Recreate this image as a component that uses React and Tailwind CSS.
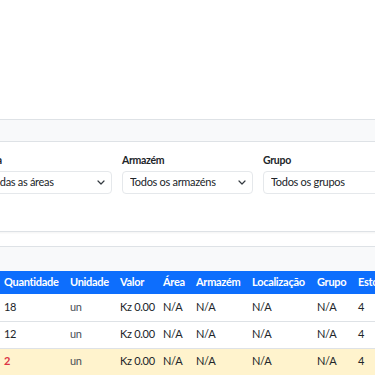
import React from "react";

const font = { fontFamily: 'Lato, "Noto Sans", sans-serif' };

function Chevron() {
  return (
    <svg width="8" height="5" viewBox="0 0 8 5" className="shrink-0">
      <path d="M1 1 L4 4 L7 1" fill="none" stroke="#343a40" strokeWidth="1.2" strokeLinecap="round" strokeLinejoin="round" />
    </svg>
  );
}

function Filter({ label, value, chevron = true }) {
  return (
    <div className="w-[131px] shrink-0 flex flex-col">
      <div className="text-[10.5px] font-bold leading-[18px] text-[#212529] mb-[2px] tracking-[-0.3px]">{label}</div>
      <div className="h-[23px] bg-white border border-[#e5e8eb] rounded-[4px] flex items-center justify-between pl-[7px] pr-[6px] text-[11px] text-[#212529] tracking-[-0.3px]">
        <span className="whitespace-nowrap overflow-hidden">{value}</span>
        {chevron && <Chevron />}
      </div>
    </div>
  );
}

const cols = [
  ["Código", "w-[60px]"],
  ["Produto", "w-[112px]"],
  ["Quantidade", "w-[66px]"],
  ["Unidade", "w-[50px]"],
  ["Valor", "w-[43px]"],
  ["Área", "w-[33px]"],
  ["Armazém", "w-[56px]"],
  ["Localização", "w-[65px]"],
  ["Grupo", "w-[41px]"],
  ["Estoque Mín.", "w-[90px]"],
  ["Ações", "w-[80px]"],
];

const rows = [
  { code: "P001", name: "Produto A", qty: "18", low: false },
  { code: "P002", name: "Produto B", qty: "12", low: false },
  { code: "P003", name: "Produto C", qty: "2", low: true },
];

export default function App() {
  return (
    <div className="w-[375px] h-[375px] overflow-hidden bg-white" style={font}>
      <div className="ml-[-176px] w-[900px] pt-[119px]">
        <div className="border-y border-[#dee2e6] bg-white shadow-[0_1px_2px_rgba(0,0,0,0.05)]">
          <div className="h-[22px] bg-[#f8f9fa] border-b border-[#dee2e6]" />
          <div className="h-[89px] pl-[16px] pt-[9px] flex gap-[10px]">
            <Filter label="Pesquisar" value="Nome ou código" chevron={false} />
            <Filter label="Área" value="Todas as áreas" />
            <Filter label="Armazém" value="Todos os armazéns" />
            <Filter label="Grupo" value="Todos os grupos" />
          </div>
        </div>
        <div className="mt-[14px] border-t border-[#dee2e6]">
          <div className="h-[24px] bg-[#f8f9fa]" />
          <table className="table-fixed w-[696px] border-collapse text-[11px] text-[#212529] tracking-[-0.3px]">
            <thead>
              <tr className="bg-[#0d6efd] text-white h-[23px]">
                {cols.map(([c, w]) => (
                  <th key={c} className={`${w} px-[8px] text-left font-bold whitespace-nowrap`}>{c}</th>
                ))}
              </tr>
            </thead>
            <tbody>
              {rows.map((r) => (
                <tr key={r.code} className={`h-[27px] border-b border-[#dee2e6] ${r.low ? "bg-[#fff3cd]" : "bg-white"}`}>
                  <td className="px-[8px] whitespace-nowrap">{r.code}</td>
                  <td className="px-[8px] whitespace-nowrap">{r.name}</td>
                  <td className={`px-[8px] whitespace-nowrap ${r.low ? "text-[#dc3545] font-bold" : ""}`}>{r.qty}</td>
                  <td className="px-[8px] whitespace-nowrap text-[#495057]">un</td>
                  <td className="px-[8px] whitespace-nowrap">Kz 0.00</td>
                  <td className="px-[8px] whitespace-nowrap">N/A</td>
                  <td className="px-[8px] whitespace-nowrap">N/A</td>
                  <td className="px-[8px] whitespace-nowrap">N/A</td>
                  <td className="px-[8px] whitespace-nowrap">N/A</td>
                  <td className="px-[8px] whitespace-nowrap">4</td>
                  <td className="px-[8px] whitespace-nowrap"></td>
                </tr>
              ))}
            </tbody>
          </table>
        </div>
      </div>
    </div>
  );
}
